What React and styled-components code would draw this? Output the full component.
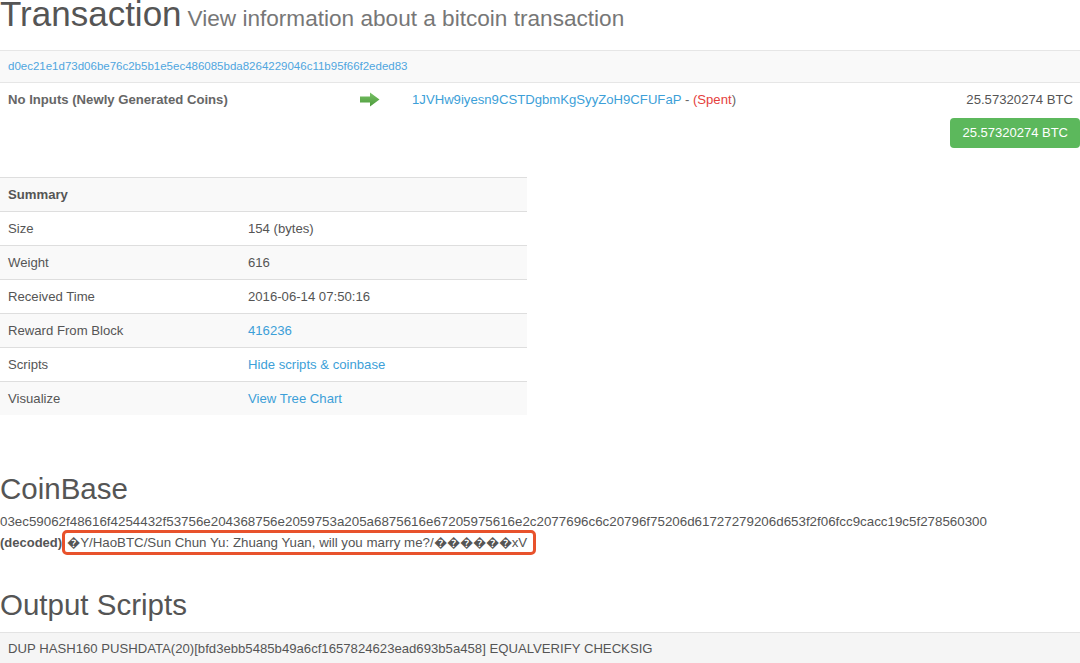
import React from 'react';
import styled, { createGlobalStyle } from 'styled-components';

const Global = createGlobalStyle`
  html, body { margin: 0; padding: 0; background: #fff; }
  body {
    font-family: "Liberation Sans", Arial, Helvetica, sans-serif;
    font-size: 13.15px;
    color: #555;
  }
  a { text-decoration: none; }
`;

const Page = styled.div`
  width: 1080px;
  height: 663px;
  overflow: hidden;
`;

const Title = styled.h1`
  margin: 0;
  font-weight: 400;
  font-size: 35px;
  line-height: 28px;
  color: #555;
  white-space: nowrap;
`;

const Subtitle = styled.small`
  font-size: 22.6px;
  line-height: 1;
  color: #777;
  margin-left: 6px;
`;

const HashBar = styled.div`
  margin-top: 19px;
  height: 33px;
  box-sizing: border-box;
  background: #f9f9f9;
  border-top: 1px solid #e6e6e6;
  border-bottom: 1px solid #e6e6e6;
  padding: 0 8px;
  display: flex;
  align-items: center;
`;

const Link = styled.a`
  color: ${p => (p.$light ? '#4fa6df' : '#3d9fd8')};
  font-size: ${p => p.$size || 'inherit'};
`;

const IOSection = styled.div`
  padding: 8px 0 29px;
`;

const IORow = styled.div`
  display: flex;
  align-items: center;
  line-height: 18px;
`;

const InputCell = styled.div`
  width: 360px;
  box-sizing: border-box;
  padding-left: 8px;
  font-weight: 700;
  color: #666;
`;

const ArrowCell = styled.div`
  width: 52px;
  display: flex;
  align-items: center;
`;

const OutputCell = styled.div`
  flex: 1;
`;

const Dash = styled.span`
  color: #666;
`;

const Spent = styled.span`
  color: #e5403c;
`;

const Amount = styled.div`
  padding-right: 7px;
  color: #555;
`;

const TotalRow = styled.div`
  display: flex;
  justify-content: flex-end;
  margin-top: 9px;
`;

const TotalButton = styled.span`
  display: inline-block;
  height: 30px;
  line-height: 30px;
  padding: 0 12px;
  border-radius: 4px;
  background: #5cb85c;
  color: #fff;
  font-size: 13px;
`;

const SummaryTable = styled.div`
  width: 527px;
`;

const SummaryRow = styled.div`
  display: grid;
  grid-template-columns: 240px 1fr;
  height: 34px;
  box-sizing: border-box;
  border-top: 1px solid #dedede;
  background: ${p => (p.$striped ? '#f9f9f9' : '#fff')};
  font-weight: ${p => (p.$head ? 700 : 400)};
  align-items: center;
`;

const Cell = styled.div`
  padding-left: 8px;
  color: #555;
`;

const SectionHeading = styled.h2`
  margin: ${p => p.$mt || '0'} 0 0;
  font-weight: 400;
  font-size: 29.5px;
  line-height: 32px;
  color: #555;
`;

const HexLine = styled.div`
  margin-top: 8px;
  line-height: 17px;
  font-size: 13.35px;
  white-space: nowrap;
  color: #555;
`;

const DecodedLine = styled.div`
  display: flex;
  align-items: center;
  height: 25px;
  white-space: nowrap;
`;

const DecodedLabel = styled.b`
  color: #555;
  font-size: 13px;
`;

const Highlight = styled.span`
  display: inline-block;
  border: 3px solid #e8522c;
  border-radius: 5px;
  padding: 0 6px 0 2px;
  line-height: 19px;
  font-size: 13.3px;
  color: #555;
`;

const ScriptBox = styled.div`
  margin-top: 11px;
  height: 32px;
  box-sizing: border-box;
  background: #f5f5f5;
  border-top: 1px solid #e3e3e3;
  padding: 0 8px;
  display: flex;
  align-items: center;
  white-space: nowrap;
`;

const Arrow = () => (
  <svg width="20" height="15" viewBox="0 0 20 15">
    <defs>
      <linearGradient id="ag" x1="0" y1="0" x2="0" y2="1">
        <stop offset="0" stopColor="#79c267" />
        <stop offset="1" stopColor="#4c9a3b" />
      </linearGradient>
    </defs>
    <path d="M0 4.5 H10 V0.5 L19.5 7.5 L10 14.5 V10.5 H0 Z" fill="url(#ag)" />
  </svg>
);

const rows = [
  ['Size', '154 (bytes)'],
  ['Weight', '616'],
  ['Received Time', '2016-06-14 07:50:16'],
  ['Reward From Block', '416236', true],
  ['Scripts', 'Hide scripts & coinbase', true],
  ['Visualize', 'View Tree Chart', true],
];

export default function App() {
  return (
    <Page>
      <Global />
      <Title>
        Transaction<Subtitle>View information about a bitcoin transaction</Subtitle>
      </Title>
      <HashBar>
        <Link $light $size="11.5px" href="#">d0ec21e1d73d06be76c2b5b1e5ec486085bda8264229046c11b95f66f2eded83</Link>
      </HashBar>
      <IOSection>
        <IORow>
          <InputCell>No Inputs (Newly Generated Coins)</InputCell>
          <ArrowCell><Arrow /></ArrowCell>
          <OutputCell>
            <Link href="#">1JVHw9iyesn9CSTDgbmKgSyyZoH9CFUFaP</Link>
            <Dash> - </Dash><Spent>(Spent</Spent><Dash>)</Dash>
          </OutputCell>
          <Amount>25.57320274 BTC</Amount>
        </IORow>
        <TotalRow>
          <TotalButton>25.57320274 BTC</TotalButton>
        </TotalRow>
      </IOSection>
      <SummaryTable>
        <SummaryRow $striped $head>
          <Cell>Summary</Cell>
          <Cell />
        </SummaryRow>
        {rows.map(([k, v, link], i) => (
          <SummaryRow key={k} $striped={i % 2 === 1}>
            <Cell>{k}</Cell>
            <Cell>{link ? <Link href="#">{v}</Link> : v}</Cell>
          </SummaryRow>
        ))}
      </SummaryTable>
      <SectionHeading $mt="58px">CoinBase</SectionHeading>
      <HexLine>03ec59062f48616f4254432f53756e204368756e2059753a205a6875616e67205975616e2c2077696c6c20796f75206d61727279206d653f2f06fcc9cacc19c5f278560300</HexLine>
      <DecodedLine>
        <DecodedLabel>(decoded)</DecodedLabel>
        <Highlight>{'\uFFFDY/HaoBTC/Sun Chun Yu: Zhuang Yuan, will you marry me?/\uFFFD\uFFFD\uFFFD\uFFFD\uFFFD\uFFFDxV'}</Highlight>
      </DecodedLine>
      <SectionHeading $mt="34px">Output Scripts</SectionHeading>
      <ScriptBox>DUP HASH160 PUSHDATA(20)[bfd3ebb5485b49a6cf1657824623ead693b5a458] EQUALVERIFY CHECKSIG</ScriptBox>
    </Page>
  );
}
